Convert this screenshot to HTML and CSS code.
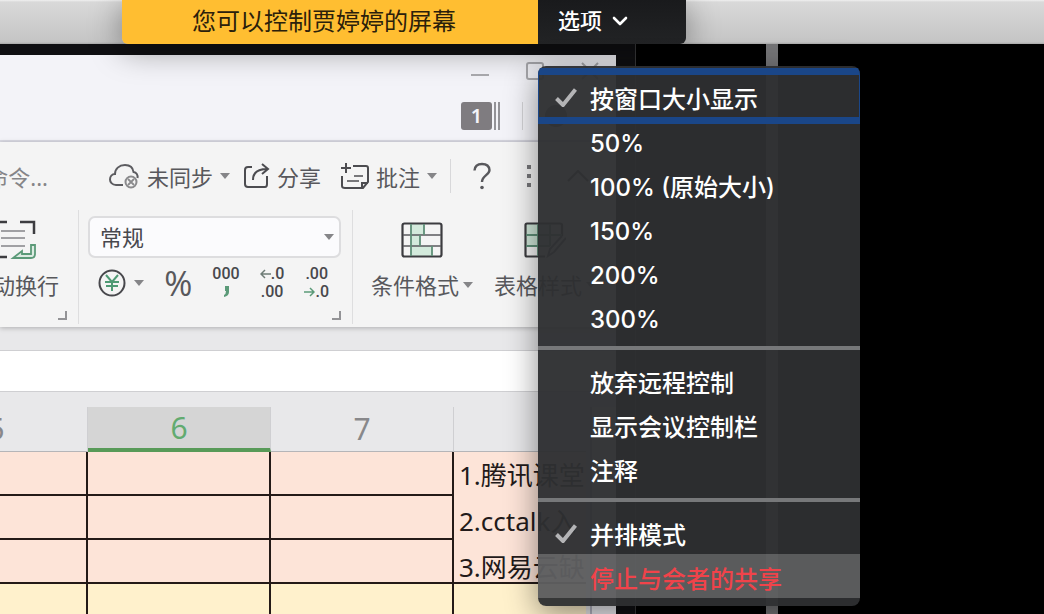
FILE: index.html
```html
<!DOCTYPE html>
<html lang="zh-CN">
<head>
    <meta charset="UTF-8">
    <meta name="viewport" content="width=device-width, initial-scale=1.0">
    <title>屏幕共享</title>
    <link rel="stylesheet" href="styles.css">
</head>
<body>
    <header class="topbar">
        <div class="share-bar">
            <div class="share-message">您可以控制贾婷婷的屏幕</div>
            <div class="options">
                <button class="options-btn" type="button">选项
                    <svg width="16" height="10" viewBox="0 0 16 10"><path d="M2 2l6 6 6-6" fill="none" stroke="#fff" stroke-width="2.6" stroke-linecap="round" stroke-linejoin="round"/></svg>
                </button>
                <ul class="menu">
                    <li><button class="menu-item focused" type="button">
                        <svg class="check" width="22" height="20" viewBox="0 0 22 20"><path d="M1.500 11.500L8 18 20.500 2.500" fill="none" stroke="#b4b4b6" stroke-width="4"/></svg>
                        <span>按窗口大小显示</span></button></li>
                    <li><button class="menu-item" type="button"><span>50%</span></button></li>
                    <li><button class="menu-item" type="button"><span>100% (原始大小)</span></button></li>
                    <li><button class="menu-item" type="button"><span>150%</span></button></li>
                    <li><button class="menu-item" type="button"><span>200%</span></button></li>
                    <li><button class="menu-item" type="button"><span>300%</span></button></li>
                    <li class="separator"></li>
                    <li><button class="menu-item" type="button"><span>放弃远程控制</span></button></li>
                    <li><button class="menu-item" type="button"><span>显示会议控制栏</span></button></li>
                    <li><button class="menu-item" type="button"><span>注释</span></button></li>
                    <li class="separator"></li>
                    <li><button class="menu-item" type="button">
                        <svg class="check" width="22" height="20" viewBox="0 0 22 20"><path d="M1.500 11.500L8 18 20.500 2.500" fill="none" stroke="#b4b4b6" stroke-width="4"/></svg>
                        <span>并排模式</span></button></li>
                    <li><button class="menu-item danger" type="button"><span>停止与会者的共享</span></button></li>
                </ul>
            </div>
        </div>
    </header>

    <main class="stage">
        <section class="shared">
            <div class="app">
                <div class="titlebar">
                    <div class="window-buttons">
                        <svg width="18" height="18" viewBox="0 0 18 18"><path d="M0 13h18" stroke="#aaaaae" stroke-width="2"/></svg>
                        <svg width="18" height="18" viewBox="0 0 18 18"><rect x="1" y="1" width="16" height="16" rx="2" fill="none" stroke="#aaaaae" stroke-width="2"/></svg>
                        <svg width="18" height="18" viewBox="0 0 18 18"><path d="M1 1l16 16M17 1L1 17" stroke="#aaaaae" stroke-width="2"/></svg>
                    </div>
                    <div class="title-tools">
                        <span class="badge">1</span>
                        <span class="stack"></span>
                        <span class="title-divider"></span>
                        <span class="avatar"></span>
                    </div>
                </div>

                <div class="ribbon">
                    <div class="commands">
                        <span class="search-hint">命令...</span>
                        <button class="cmd cmd-sync" type="button">
                            <svg width="32" height="28" viewBox="0 0 32 28"><path d="M15 23H8C4 23 2 20 2 17.500c0-3 2-5.500 5-5.500C7 7 11 3 17 3c5 0 8 3 8.500 7 3 .5 4.500 3 4 6" fill="none" stroke="#5c5c60" stroke-width="2"/><circle cx="23" cy="20" r="5.500" fill="none" stroke="#8a8a8c" stroke-width="2"/><path d="M20 17l6 6M26 17l-6 6" stroke="#8a8a8c" stroke-width="1.800"/></svg>
                            未同步
                            <svg class="caret" width="10" height="6" viewBox="0 0 10 6"><path d="M0 0h10L5 6z" fill="#858588"/></svg>
                        </button>
                        <button class="cmd" type="button">
                            <svg width="27" height="26" viewBox="0 0 27 26"><path d="M9 4H5Q2 4 2 7v14q0 3 3 3h17q2 0 2-3v-8M10 17c0-7 4-11 14-11M19 1l6 5-6 5" fill="none" stroke="#4c4c50" stroke-width="2"/></svg>
                            分享
                        </button>
                        <button class="cmd cmd-comment" type="button">
                            <svg width="28" height="26" viewBox="0 0 28 26"><path d="M5 0v10M0 5h10M12 3h13q2 0 2 2v14l-5 6H4q-3 0-3-2V13M21 25v-5h6" fill="none" stroke="#4c4c50" stroke-width="2"/><path d="M13 13h9M6 18h12" stroke="#77777a" stroke-width="2"/></svg>
                            批注
                            <svg class="caret" width="10" height="6" viewBox="0 0 10 6"><path d="M0 0h10L5 6z" fill="#858588"/></svg>
                        </button>
                        <span class="cmd-divider"></span>
                        <button class="icon-btn" type="button" aria-label="帮助">
                            <svg width="18" height="28" viewBox="0 0 18 28"><path d="M1.500 8.500Q2 2 9 2t7.500 6c0 5-7.500 5.500-7.500 12" fill="none" stroke="#58585c" stroke-width="2.400"/><circle cx="9" cy="25.500" r="1.800" fill="#58585c"/></svg>
                        </button>
                        <button class="icon-btn" type="button" aria-label="更多">
                            <svg width="4" height="24" viewBox="0 0 4 24"><path d="M0 1h4v4H0zM0 10h4v4H0zM0 19h4v4H0z" fill="#77777a"/></svg>
                        </button>
                        <button class="icon-btn" type="button" aria-label="收起">
                            <svg width="22" height="12" viewBox="0 0 22 12"><path d="M1 11L11 1l10 10" fill="none" stroke="#58585c" stroke-width="2"/></svg>
                        </button>
                    </div>

                    <div class="groups">
                        <div class="group group-wrap">
                            <button class="tool" type="button">
                                <svg width="42" height="40" viewBox="0 0 42 40"><path d="M1 13V2h12M26 2h14v12M13 37H1V26" fill="none" stroke="#3c3c40" stroke-width="2.500"/><path d="M7 11h24M7 18h24M7 26h24" stroke="#a0a0a3" stroke-width="2"/><path d="M37 25h4v9q0 4-4 4H19l9-7v3h9z" fill="#dcebe2" stroke="#5b9a78" stroke-width="1.800"/></svg>
                                <span>自动换行</span>
                            </button>
                            <span class="corner"></span>
                        </div>
                        <div class="group group-number">
                            <div class="format-box">
                                <select class="format-select" aria-label="数字格式">
                                    <option>常规</option>
                                </select>
                                <svg class="caret" width="10" height="6" viewBox="0 0 10 6"><path d="M0 0h10L5 6z" fill="#858588"/></svg>
                            </div>
                            <div class="number-tools">
                                <button class="icon-btn currency" type="button" aria-label="货币">
                                    <svg width="28" height="28" viewBox="0 0 28 28"><circle cx="14" cy="14" r="12.500" fill="none" stroke="#48484c" stroke-width="2"/><path d="M8 6l6 7 6-7M7 13h14M8 17h12M14 13v9" fill="none" stroke="#4f9a74" stroke-width="2"/></svg>
                                    <svg class="caret" width="10" height="6" viewBox="0 0 10 6"><path d="M0 0h10L5 6z" fill="#858588"/></svg>
                                </button>
                                <button class="icon-btn percent" type="button">%</button>
                                <button class="icon-btn digits" type="button"><span>000</span><svg width="8" height="18" viewBox="0 0 8 18"><path d="M3 3h4v6q0 4-5 5v-2q2-1 2-4H3z" fill="#5b9a78"/></svg></button>
                                <button class="icon-btn digits" type="button"><span><svg width="11" height="10" viewBox="0 0 11 10"><path d="M11 5H1M5 1L1 5l4 4" fill="none" stroke="#6e7c76" stroke-width="1.500"/></svg>.0</span><span>.00</span></button>
                                <button class="icon-btn digits" type="button"><span>.00</span><span><svg width="11" height="10" viewBox="0 0 11 10"><path d="M0 5h10M6 1l4 4-4 4" fill="none" stroke="#5b9a78" stroke-width="1.500"/></svg>.0</span></button>
                            </div>
                            <span class="corner"></span>
                        </div>
                        <div class="group group-style">
                            <button class="tool" type="button">
                                <svg width="42" height="36" viewBox="0 0 42 36"><path d="M10 2h13v11H10zM10 13h9v11h-9zM10 24h21v10H10z" fill="#d3eadc"/><rect x="1.500" y="1.500" width="39" height="33" rx="2" fill="none" stroke="#3c3c40" stroke-width="2.200"/><path d="M2 13h38M2 24h38" stroke="#5a5a5e" stroke-width="1.500"/><path d="M10 2v32M23 2v11M19 13v11M31 24v10" stroke="#5f8f78" stroke-width="1.800"/></svg>
                                <span>条件格式<svg class="caret" width="10" height="6" viewBox="0 0 10 6"><path d="M0 0h10L5 6z" fill="#858588"/></svg></span>
                            </button>
                            <button class="tool" type="button">
                                <svg width="42" height="36" viewBox="0 0 42 36"><path d="M2 2h24v22H2z" fill="#cfe6d8"/><path d="M38 14V3q0-1.500-2-1.500H3q-1.500 0-1.500 1.500v30q0 1.500 1.500 1.500h18" fill="none" stroke="#3c3c40" stroke-width="2.200"/><path d="M2 13h36M2 24h24M14 2v32M26 2v22" stroke="#5f8f78" stroke-width="1.800"/><path d="M42 16L30 30l-6 4 2-7 12-13" fill="none" stroke="#5a5a5e" stroke-width="2"/></svg>
                                <span>表格样式<svg class="caret" width="10" height="6" viewBox="0 0 10 6"><path d="M0 0h10L5 6z" fill="#858588"/></svg></span>
                            </button>
                        </div>
                    </div>
                </div>

                <div class="formula-bar"></div>

                <div class="sheet">
                    <table class="grid">
                        <colgroup><col class="col"><col class="col"><col class="col"><col></colgroup>
                        <thead>
                            <tr><th>5</th><th class="selected">6</th><th>7</th><th></th></tr>
                        </thead>
                        <tbody>
                            <tr><td></td><td></td><td></td>
                                <td class="notes" rowspan="3"><div><p>1.腾讯课堂</p><p>2.cctalk入</p><p>3.网易云缺</p></div></td></tr>
                            <tr><td></td><td></td><td></td></tr>
                            <tr><td></td><td></td><td></td></tr>
                            <tr class="yellow"><td></td><td></td><td></td><td></td></tr>
                        </tbody>
                    </table>
                    <div class="scrollbar"></div>
                </div>
            </div>
        </section>
        <div class="blank"></div>
        <div class="splitter"></div>
        <div class="blank"></div>
    </main>
</body>
</html>
```
FILE: styles.css
```css
* {
    box-sizing: border-box;
}
body {
    margin: 0;
    height: 100vh;
    display: flex;
    flex-direction: column;
    overflow: hidden;
    background: #000;
    font-family: "Inter", "Noto Sans CJK SC", sans-serif;
}
button {
    margin: 0;
    padding: 0;
    border: none;
    background: none;
    font-family: inherit;
    color: inherit;
    cursor: pointer;
}
svg {
    display: block;
    flex: none;
}

/* top bar */
.topbar {
    position: relative;
    z-index: 2;
    flex: none;
    height: 44px;
    padding-left: 122px;
    background: linear-gradient(#f0f0f0, #d9d9d9 2px, #c5c5c5 42px, #a8a8a8);
}
.share-bar {
    display: flex;
    width: 564px;
    height: 44px;
    border-radius: 0 0 6px 6px;
    box-shadow: 0 6px 32px rgba(0, 0, 0, 0.4);
}
.share-message {
    flex: 1;
    padding-right: 12px;
    border-radius: 0 0 0 6px;
    background: #ffbe31;
    color: #2b200b;
    font-size: 24px;
    line-height: 44px;
    text-align: center;
}
.options {
    position: relative;
    width: 148px;
    border-radius: 0 0 6px 0;
    background: linear-gradient(#191a1c, #222325);
}
.options-btn {
    display: flex;
    align-items: center;
    gap: 10px;
    height: 42px;
    padding-left: 20px;
    color: #fff;
    font-size: 22px;
    font-weight: 500;
    line-height: 40px;
}

/* options menu */
.menu {
    position: absolute;
    top: 66px;
    left: 0;
    width: 322px;
    margin: 0;
    padding: 8px 0;
    list-style: none;
    border-radius: 8px;
    overflow: hidden;
    background: rgba(46, 47, 49, 0.96);
    box-shadow: 0 8px 32px rgba(0, 0, 0, 0.45);
}
.menu-item {
    display: grid;
    grid-template-columns: 35px 1fr;
    align-items: center;
    width: 100%;
    height: 44px;
    padding: 8px 0 0 17px;
    color: #fff;
    font-size: 24px;
    font-weight: 500;
    line-height: 36px;
    text-align: left;
}
.menu-item span {
    grid-column: 2;
}
.check {
    grid-row: 1;
    margin-bottom: 6px;
}
.focused {
    box-shadow: 0 -6px #1a4688, 0 6px #1a4688, inset 0 0 0 1px #1a4688;
}
.separator {
    height: 4px;
    margin: 8px 0;
    background: #77787a;
}
.danger {
    background: rgba(255, 255, 255, 0.22);
    color: #f0434a;
}

/* remote screen */
.stage {
    flex: 1;
    min-height: 0;
    display: grid;
    grid-template-columns: 318fr 65fr 12px 133fr;
}
.shared {
    min-width: 0;
    padding: 11px 19px 0 0;
    border-right: 1px solid #3a3a3c;
    background: #101013;
    overflow: hidden;
}
.splitter {
    background: #757577;
}
.app {
    height: 100%;
    display: flex;
    flex-direction: column;
    overflow: hidden;
    background: #e8e8ea;
    color: #58585c;
    font-family: "Noto Sans", "Noto Sans CJK SC", sans-serif;
}
.titlebar {
    flex: none;
    height: 87px;
    padding-top: 7px;
    border-bottom: 2px solid #dadae3;
    background: #f3f3f8;
}
.window-buttons {
    display: flex;
    justify-content: flex-end;
    gap: 37px;
    padding-right: 17px;
}
.title-tools {
    display: flex;
    justify-content: flex-end;
    align-items: center;
    padding: 22px 49px 0 0;
}
.badge {
    width: 31px;
    height: 28px;
    border-radius: 3px;
    background: #7f7c80;
    color: #f3f3f8;
    font-size: 20px;
    font-weight: 600;
    line-height: 28px;
    text-align: center;
}
.stack {
    width: 6px;
    height: 28px;
    margin-left: 2px;
    border: solid #939297;
    border-width: 0 2px;
}
.title-divider {
    width: 1px;
    height: 28px;
    margin: 0 22px;
    background: #d2d2d6;
}
.avatar {
    width: 22px;
    height: 22px;
    border-radius: 50%;
    background: #77777a;
}

/* ribbon */
.ribbon {
    flex: none;
    height: 185px;
    background: #f4f4f4;
    box-shadow: 0 1px 5px rgba(0, 0, 0, 0.25);
    font-size: 22px;
}
.commands {
    display: flex;
    align-items: center;
    height: 68px;
}
.search-hint {
    display: flex;
    flex: none;
    justify-content: flex-end;
    width: 48px;
    margin-right: 60px;
    overflow: hidden;
    white-space: nowrap;
    color: #858588;
}
.cmd {
    display: flex;
    align-items: center;
    flex: none;
    gap: 7px;
    margin-right: 20px;
    font-size: 22px;
}
.cmd-sync,
.cmd-comment {
    margin-right: 13px;
}
.cmd-divider {
    flex: none;
    width: 1px;
    height: 34px;
    margin-right: 22px;
    background: #d8d8da;
}
.icon-btn {
    flex: none;
    margin-right: 36px;
}
.groups {
    display: flex;
    height: 114px;
}
.group {
    position: relative;
    flex: none;
    border-right: 1px solid #dededf;
}
.group-wrap {
    display: flex;
    justify-content: flex-end;
    width: 79px;
    padding-right: 19px;
    overflow: hidden;
}
.tool {
    display: flex;
    flex-direction: column;
    align-items: center;
    flex: none;
    padding-top: 10px;
    font-size: 22px;
    line-height: 30px;
    white-space: nowrap;
}
.tool > svg {
    height: 40px;
}
.tool span {
    display: flex;
    align-items: center;
    gap: 4px;
    margin-top: 10px;
}
.corner {
    position: absolute;
    right: 11px;
    bottom: 4px;
    width: 9px;
    height: 9px;
    border: solid #939396;
    border-width: 0 2px 2px 0;
}
.group-number {
    width: 274px;
    padding: 6px 11px 0 9px;
}
.format-box {
    display: grid;
    align-items: center;
}
.format-box > * {
    grid-area: 1 / 1;
}
.format-box .caret {
    justify-self: end;
    margin-right: 7px;
    pointer-events: none;
}
.format-select {
    appearance: none;
    width: 100%;
    height: 42px;
    padding: 0 10px;
    border: 2px solid #dddddf;
    border-radius: 7px;
    background: #fbfbfd;
    color: #48484e;
    font-family: inherit;
    font-size: 22px;
}
.number-tools {
    display: flex;
    align-items: center;
    justify-content: space-between;
    height: 50px;
    padding: 0 12px 0 10px;
}
.number-tools .icon-btn {
    margin: 0;
}
.currency {
    display: flex;
    align-items: center;
    gap: 8px;
}
.percent {
    font-size: 34px;
    font-weight: 400;
    font-family: "Open Sans", sans-serif;
    line-height: 34px;
}
.digits {
    display: flex;
    flex-direction: column;
    align-items: center;
    color: #48484c;
    font-family: "Roboto", sans-serif;
    font-size: 16px;
    font-weight: 500;
    line-height: 18px;
}
.digits span {
    display: flex;
    align-items: center;
}
.group-style {
    display: flex;
    gap: 21px;
    padding-left: 18px;
    border: none;
}

/* sheet */
.formula-bar {
    flex: none;
    height: 42px;
    margin-top: 23px;
    border: solid #cfcfd2;
    border-width: 1px 0;
    background: #fff;
}
.sheet {
    flex: 1;
    display: flex;
    min-height: 0;
    padding-top: 15px;
    overflow: hidden;
}
.grid {
    flex: 1;
    align-self: flex-start;
    table-layout: fixed;
    margin-left: -95px;
    border-spacing: 0;
}
.col {
    width: 183px;
}
.grid th {
    height: 45px;
    padding: 0;
    border-right: 1px solid #cfcfd2;
    border-bottom: 1px solid #b5b5b8;
    color: #88888b;
    font-size: 30px;
    font-weight: 400;
    line-height: 40px;
}
.grid th:last-child {
    border-right: none;
}
.grid .selected {
    border-bottom: 4px solid #589a58;
    background: #d5d5d5;
    color: #62ab70;
}
.grid td {
    height: 44px;
    padding: 0;
    border: solid #241a17;
    border-width: 0 2px 2px 0;
    background: #fde4d8;
}
.grid td:last-child:not(:nth-child(3)) {
    border-right: none;
}
.grid .notes {
    padding: 0 0 0 5px;
    color: #231a1a;
    font-size: 26px;
    white-space: nowrap;
}
.notes div {
    height: 130px;
}
.notes p {
    margin: 0;
    line-height: 46px;
}
.grid .yellow td {
    background: #fff1cc;
}
.scrollbar {
    width: 26px;
    margin-left: 4px;
    border-left: 2px solid #b4b4c2;
    background: #ececf1;
}
```
